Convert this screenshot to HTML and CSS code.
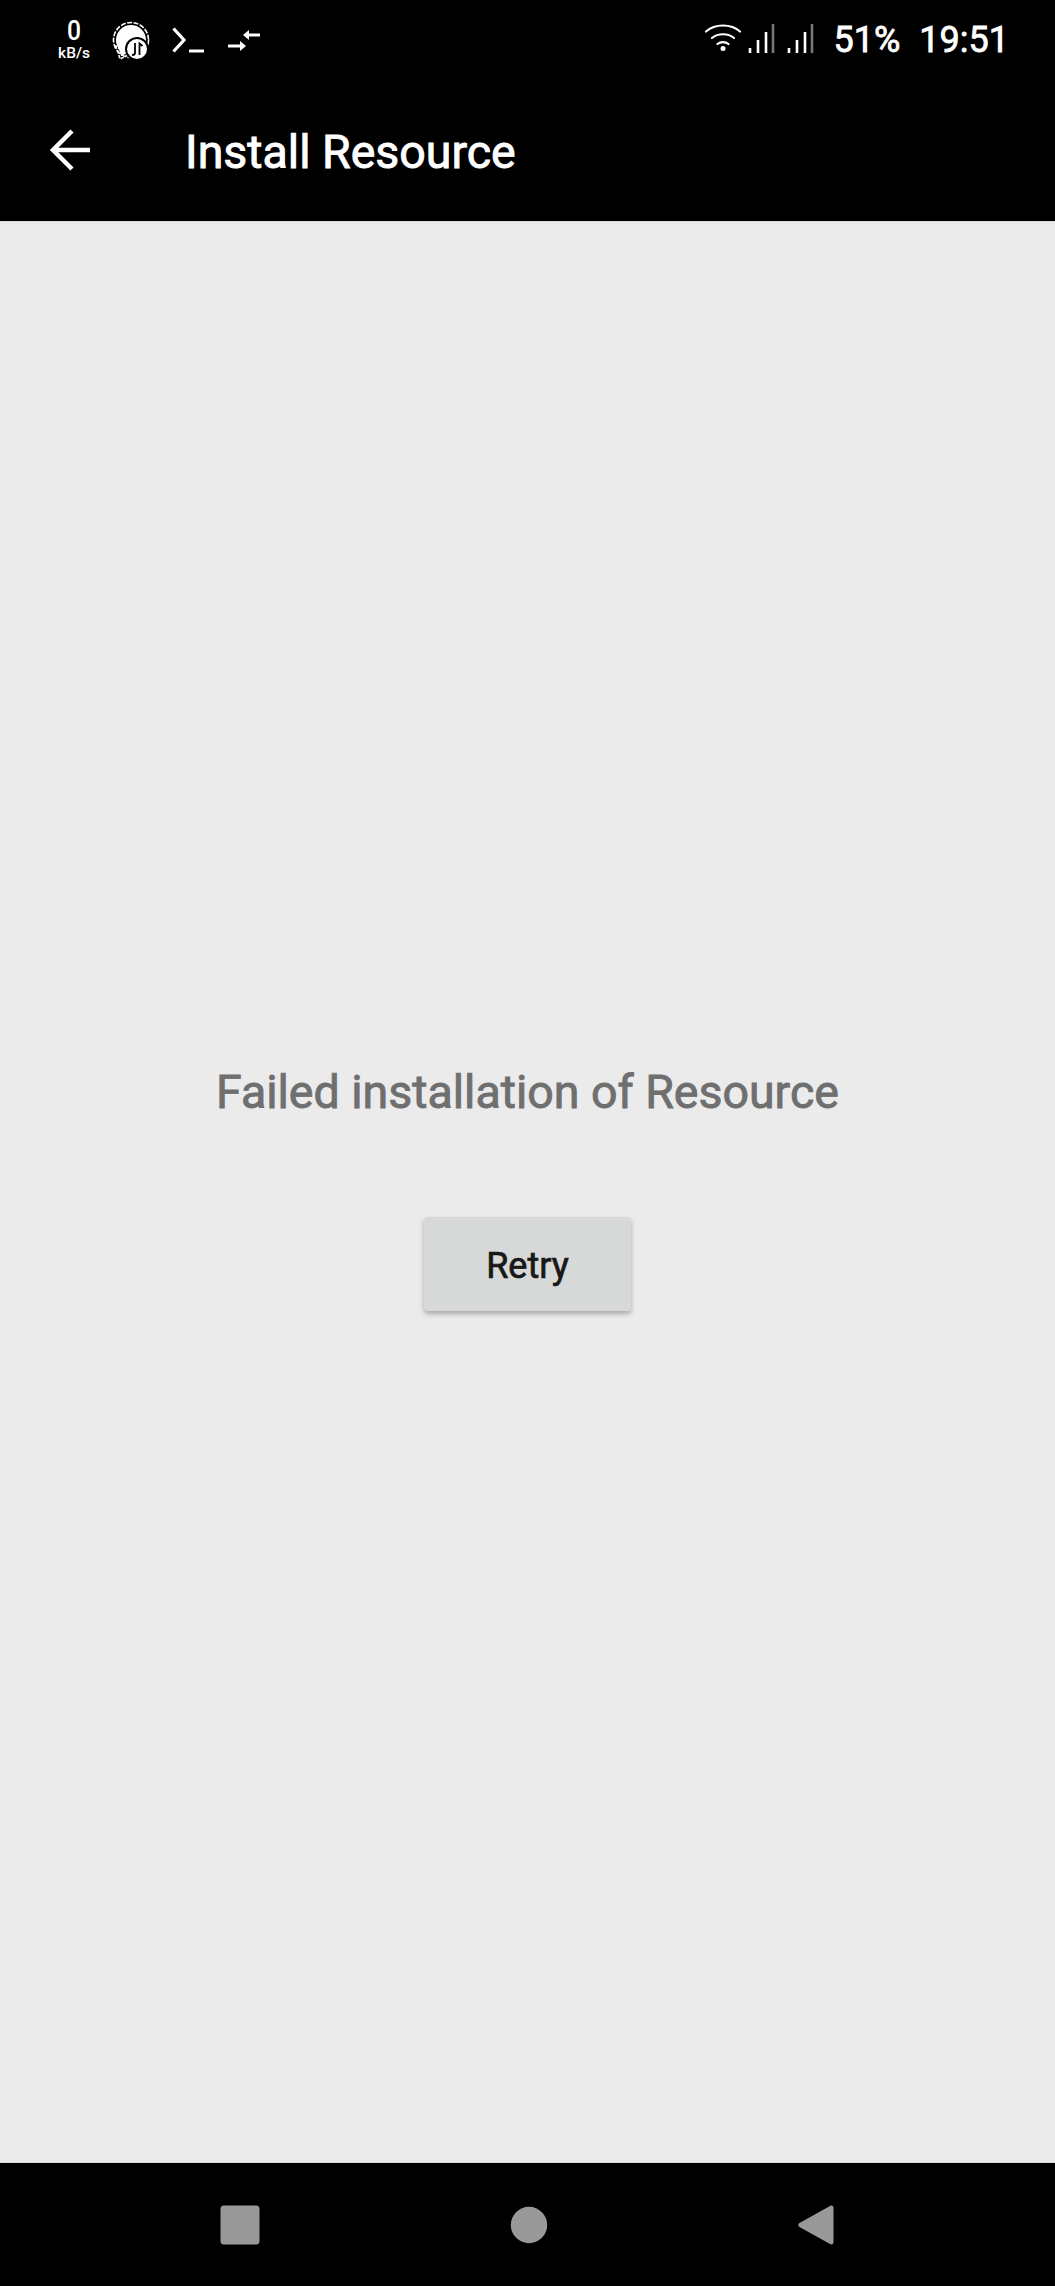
FILE: index.html
```html
<!DOCTYPE html>
<html lang="en">
<head>
<meta charset="utf-8">
<title>Install Resource</title>
<link rel="stylesheet" href="styles.css">
</head>
<body>
<div class="phone">
  <header class="top">
    <div class="status">
      <div class="status-left">
        <div class="speed"><span class="speed-num">0</span><span class="speed-unit">kB/s</span></div>
        <svg class="ic-bubble" width="40" height="40" viewBox="0 0 40 40">
          <circle cx="19" cy="19" r="17.500" fill="none" stroke="#fff" stroke-width="1.600" stroke-dasharray="5 1.500"/>
          <path d="M3.500 24.500 6 31 8 38l7-3.500z" fill="none" stroke="#fff" stroke-width="1.600" stroke-dasharray="3.500 1.500"/>
          <circle cx="19" cy="19" r="15" fill="#fff"/>
          <path d="M6 25l3 10 9-4z" fill="#fff"/>
          <circle cx="25" cy="28" r="12" fill="#000"/>
          <circle cx="25" cy="28" r="10" fill="#fff"/>
          <path d="M23 22v10q0 2-3 2M27.500 34V22.500q0 0 3 2.500" fill="none" stroke="#000" stroke-width="1.800"/>
        </svg>
        <svg class="ic-term" width="32" height="26" viewBox="0 0 32 26">
          <path d="M1.500 1.500 12 13 1.500 24.500" fill="none" stroke="#fff" stroke-width="3.200"/>
          <path d="M17 24h15" stroke="#fff" stroke-width="3"/>
        </svg>
        <svg class="ic-arrows" width="32" height="22" viewBox="0 0 32 22">
          <path d="M32 6H20" stroke="#fff" stroke-width="3" fill="none"/>
          <path d="M15 6l6-5v10z" fill="#fff"/>
          <path d="M0 17h13" stroke="#fff" stroke-width="3" fill="none"/>
          <path d="M18 17l-6-5v10z" fill="#fff"/>
        </svg>
      </div>
      <div class="status-right">
        <svg class="ic-wifi" width="38" height="29" viewBox="0 0 38 29">
          <g fill="none" stroke="#fff" stroke-width="2.200" stroke-linecap="round">
            <path d="M2 8.500C11 .5 27 .5 36 8.500"/>
            <path d="M8 15c6-5 16-5 22 0"/>
            <path d="M13.500 21c3-2.500 8-2.500 11 0"/>
          </g>
          <circle cx="19" cy="25.500" r="2.500" fill="#fff"/>
        </svg>
        <svg class="ic-signal" width="27" height="29" viewBox="0 0 27 29">
          <path d="M2 24v5M10 16v13M18 8v21" stroke="#fff" stroke-width="2.600" fill="none"/>
          <path d="M25 0v29" stroke="#777" stroke-width="2.600" fill="none"/>
        </svg>
        <svg class="ic-signal" width="27" height="29" viewBox="0 0 27 29">
          <path d="M2 24v5M10 16v13M18 8v21" stroke="#fff" stroke-width="2.600" fill="none"/>
          <path d="M25 0v29" stroke="#777" stroke-width="2.600" fill="none"/>
        </svg>
        <span class="battery">51%</span>
        <span class="clock">19:51</span>
      </div>
    </div>
    <div class="toolbar">
      <svg class="ic-back" width="42" height="42" viewBox="0 0 42 42">
        <path d="M41 21H4M23 2 4 21l19 19" fill="none" stroke="#fff" stroke-width="4.500"/>
      </svg>
      <h1 class="title">Install Resource</h1>
    </div>
  </header>
  <main class="content">
    <p class="message">Failed installation of Resource</p>
    <button class="retry" type="button">Retry</button>
  </main>
  <nav class="navbar">
    <svg class="nav-ic" width="40" height="40" viewBox="0 0 40 40"><rect x=".5" y=".5" width="39" height="39" rx="3.500" fill="#999"/></svg>
    <svg class="nav-ic" width="38" height="38" viewBox="0 0 38 38"><circle cx="19" cy="19" r="18.200" fill="#999"/></svg>
    <svg class="nav-ic" width="38" height="42" viewBox="0 0 38 42"><path d="M33 2 2.500 19a2.300 2.300 0 0 0 0 4L33 40c2 1 3.500 0 3.500-2V4c0-2-1.500-3-3.500-2z" fill="#999"/></svg>
  </nav>
</div>
</body>
</html>
```
FILE: styles.css
```css
* { box-sizing: border-box; }
html, body { margin: 0; padding: 0; }
body { font-family: Roboto, "Liberation Sans", sans-serif; background: #ebebeb; }
.phone { width: 1055px; height: 2286px; display: flex; flex-direction: column; }
.top { height: 222px; background: #000; color: #fff; flex: none; border-bottom: 1px solid #d8d8d8; }
.status { height: 80px; display: flex; justify-content: space-between; align-items: center; padding: 0 46px 0 57px; }
.status-left, .status-right { display: flex; align-items: center; }
.speed { display: flex; flex-direction: column; align-items: center; width: 34px; font-weight: 500; padding-bottom: 2px; }
.speed-num { font-size: 28px; line-height: 28px; height: 28px; transform: scaleX(.88); }
.speed-unit { font-size: 15.500px; line-height: 16px; height: 16px; white-space: nowrap; }
.ic-bubble { margin-left: 21px; margin-top: 1px; }
.ic-term { margin-left: 20px; margin-top: -1px; }
.ic-arrows { margin-left: 24px; }
.ic-wifi { margin-top: -5px; margin-left: 0; }
.ic-signal { margin-left: 12px; margin-top: -3px; }
.ic-wifi + .ic-signal { margin-left: 6px; }
.battery { font-size: 36px; font-weight: 400; -webkit-text-stroke: .8px currentColor; margin-left: 20px; }
.clock { font-size: 36px; font-weight: 400; -webkit-text-stroke: .8px currentColor; margin-left: 19px; }
.toolbar { height: 141px; display: flex; align-items: center; padding: 0 0 0 49px; }
.ic-back { flex: none; margin-top: -2px; }
.title { margin: 4px 0 0 94px; font-size: 46.500px; font-weight: 400; -webkit-text-stroke: .9px currentColor; line-height: 1; }
.content { flex: 1; display: flex; flex-direction: column; align-items: center; padding-top: 843px; }
.message { margin: 0; font-size: 46.500px; font-weight: 400; -webkit-text-stroke: .9px currentColor; color: #6f6f6f; line-height: 55px; }
.retry { margin-top: 97px; width: 207px; height: 94px; padding: 3px 0 0; border: 0; border-radius: 4px; background: #d7d9d9; color: #181818; font: 400 36px Roboto, sans-serif; -webkit-text-stroke: .7px currentColor; box-shadow: 0 3px 5px rgba(0,0,0,.28); }
.navbar { height: 124px; flex: none; background: #000; border-top: 1px solid #d8d8d8; display: flex; align-items: center; padding: 0 220px 0 220px; justify-content: space-between; }
```
